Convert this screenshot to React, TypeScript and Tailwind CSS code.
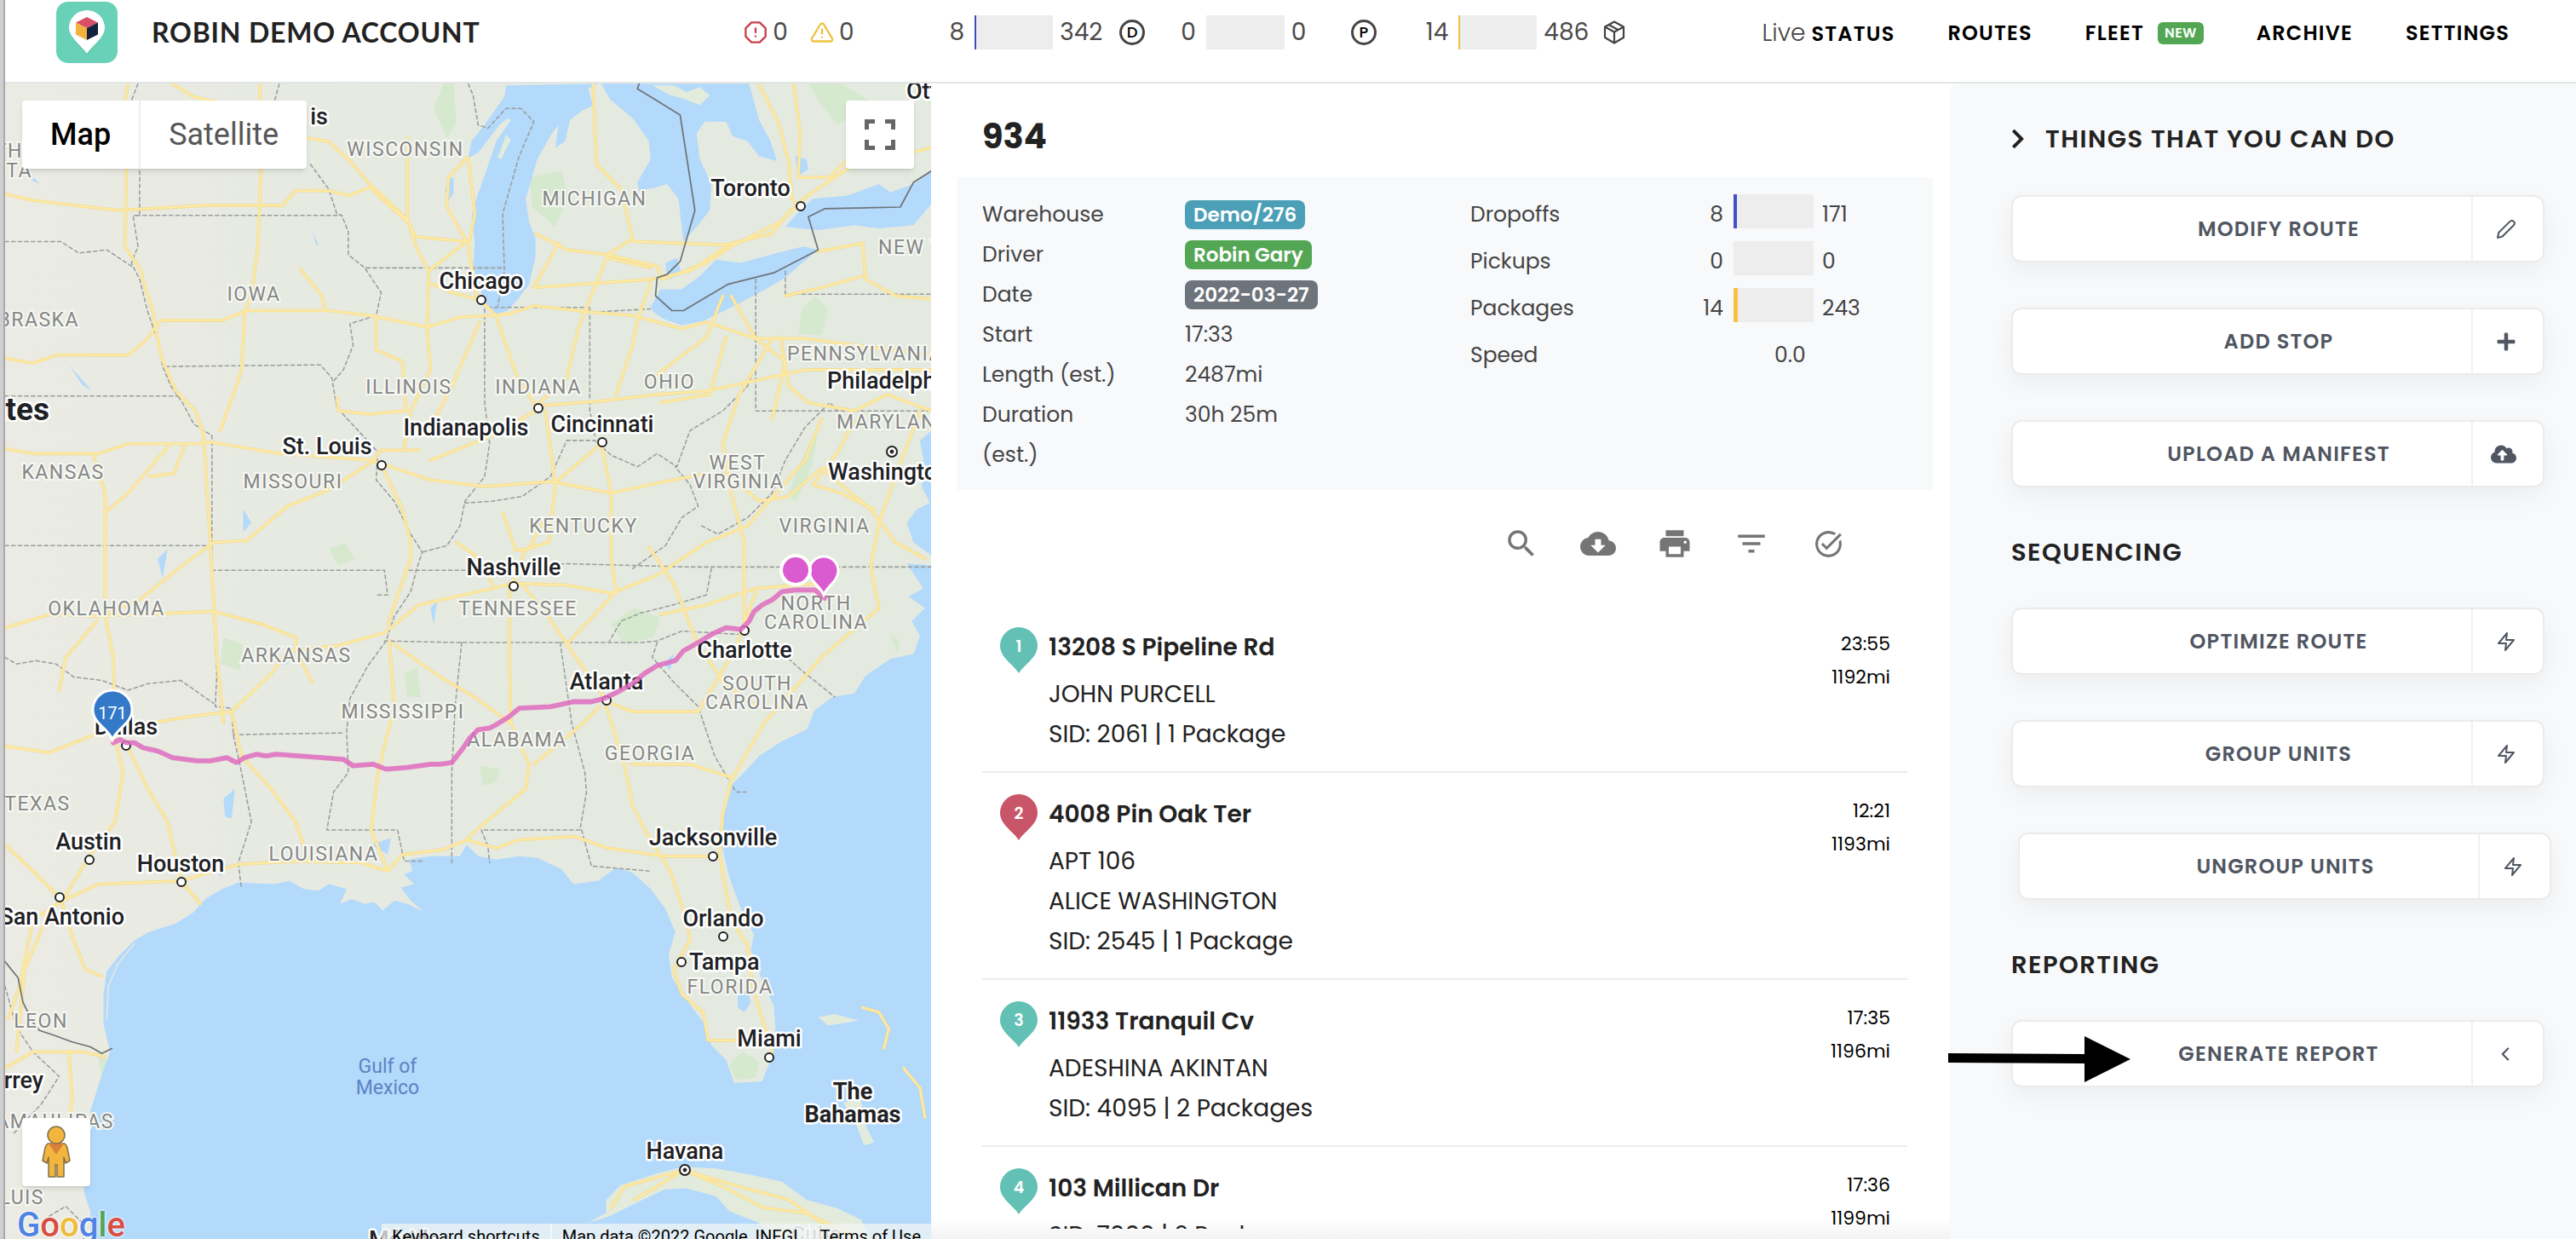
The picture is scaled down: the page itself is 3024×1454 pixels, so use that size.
import type { ReactNode } from "react";
import { FiAlertOctagon, FiAlertTriangle, FiChevronLeft, FiZap } from "react-icons/fi";
import { FaChevronRight, FaCloudUploadAlt, FaPlus } from "react-icons/fa";
import { MdCloudDownload, MdFilterList, MdPrint, MdSearch, MdTaskAlt } from "react-icons/md";

type Place = { name: string; x: number; y: number; anchor?: "start" | "end" };
type Dot = { x: number; y: number; capital?: boolean };
type Stop = { id: number; late?: boolean; title: string; lines: string[]; time: string; miles: string };

const water = [
  "308,52 307,59 295,76 287,86 285,96 291,93 304,76 309,72 311,73 302,86 296,104 291,118 287,131 289,147 288,162 293,178 296,187 303,191 309,189 316,181 322,173 326,156 326,145 322,135 320,121 323,111 327,97 336,81 340,76 338,90 344,86 347,73 355,67 361,64 358,54 364,51",
  "366,51 371,60 386,73 395,86 396,97 388,111 389,116 400,114 406,112 413,121 416,147 424,138 432,128 433,112 426,97 424,81 429,74 442,74 446,83 455,86 462,95 473,98 469,86 462,73 456,51",
  "396,187 394,183 398,190 404,194 415,198 429,195 447,186 466,176 478,169 487,161 498,152 489,150 469,155 451,160 436,158 426,168 415,176 402,176",
  "405,160 412,157 415,167 406,170",
  "487,128 495,121 516,119 535,112 542,117 556,112 567,104 567,124 556,137 535,139 520,137 498,140 478,138",
  "273,109 276,108 276,118 273,122 271,116",
  "484,95 491,97 492,103 486,107",
  "567,262 560,268 563,285 561,296 566,306 558,310 552,318 556,330 567,338 567,344 552,343 562,358 553,363 563,370 555,378 560,387 556,398 542,401 527,411 520,422 507,424 496,432 491,444 476,451 462,460 453,470 446,477 442,491 438,505 438,509 444,534 451,553 459,569 457,578 464,597 471,612 472,626 469,645 464,658 447,659 442,645 433,636 429,623 422,614 416,605 409,595 407,581 411,567 405,553 396,541 385,531 375,528 364,536 349,538 342,529 327,522 316,521 302,523 291,521 284,514 280,521 262,521 249,523 251,530 246,532 252,538 244,540 250,548 258,555 248,550 240,548 233,554 228,549 222,550 214,547 207,550 211,541 200,538 194,542 185,541 176,536 167,538 145,537 135,541 125,547 118,555 107,562 91,567 82,572 73,581 65,591 63,605 63,623 67,640 62,654 55,676 54,702 51,725 55,737 55,754 567,754",
  "449,606 455,602 457,610 453,616 449,613",
];

const islands = [
  "397,52 410,52 418,56 426,53 432,58 426,64 416,60 408,58",
  "303,96 308,82 311,85 305,97",
  "358,744 369,738 369,730 378,721 400,714 416,710 436,711 458,715 476,719 491,730 509,735 524,742 530,754 469,754 462,744 444,737 436,728 418,723 404,724 385,733 371,740",
  "513,671 524,669 527,685 532,695 526,697 520,681",
  "498,619 508,617 523,621 504,624",
];

const parks = [
  "270,51 276,51 278,75 272,84 264,66",
  "492,51 512,51 530,62 510,76 500,64",
  "322,108 342,104 346,120 338,138 324,126",
  "488,188 496,180 504,188 500,204 486,203",
  "372,380 386,370 402,376 398,388 380,392",
  "480,300 492,270 498,262 494,284 484,306",
  "136,388 148,392 146,408 134,404",
  "200,334 210,330 216,340 206,344",
  "444,648 452,640 462,646 460,656 448,657",
  "424,726 440,728 446,736 436,738",
  "246,410 254,406 256,424 248,424",
  "292,466 304,468 302,476 294,478",
  "542,386 548,390 546,398",
  "59,640 66,645 62,656",
];

const lakes = [
  "17,104 24,112 20,110",
  "42,222 56,238 50,234",
  "148,310 153,318 148,324",
  "96,340 102,334 99,352",
  "136,486 143,480 141,498 137,497",
  "262,370 266,366 264,380",
  "190,140 194,150 192,148",
  "404,404 410,398 408,408",
  "226,514 238,510 236,520",
  "132,522 138,526 134,534",
  "166,398 176,404 170,404",
];

const roads = [
  "3,118 20,122 72,128 125,125 172,125 180,116 200,116 212,119 225,114 240,128 248,135",
  "78,51 76,62 77,100 76,150 85,163 93,190 98,217 107,238 119,250 124,265 128,330 132,400 136,440",
  "158,51 159,100 157,150 153,180 149,190 147,225 142,240 134,262",
  "105,51 118,59 132,62",
  "3,218 20,221 35,216 78,216 88,208 98,195 135,195 150,189 200,189 225,192 260,199 280,193 300,192 310,191 325,186 360,190 385,192 415,200 430,196 460,206 490,206 520,210 567,216",
  "187,84 200,86 213,98 225,112 236,122 248,134 254,152 261,165 260,200 262,225",
  "248,84 248,134 253,144 284,147",
  "284,96 273,108 272,126 284,147 262,164",
  "285,96 289,130 285,150 290,180 302,192",
  "183,164 196,180 198,189",
  "229,192 229,213 245,220 247,250 225,252 206,250 205,242",
  "261,172 275,178 290,182",
  "3,273 20,276 60,276 78,270 120,270 128,269 170,276 225,280 232,282 262,292 295,296 336,293 372,300 400,294 430,288",
  "57,277 64,300 64,375 69,400 70,450 75,470 70,500 55,520 38,548 20,560 12,600 5,620",
  "64,312 78,300 102,272",
  "91,290 106,288 112,272",
  "3,382 30,374 60,375 130,372 160,380 180,388 180,396 190,415",
  "60,375 85,365 110,345 130,330 150,329 175,308 200,298 225,282 232,274 255,274",
  "59,378 40,400 36,420",
  "3,454 30,458 60,446 75,443 115,436 141,433 165,410 175,396 205,393 234,385 255,368 300,358 312,355 345,356 372,361 400,350 430,330 455,320 490,280 500,255",
  "141,433 147,460 165,480 180,500 188,524",
  "78,455 90,480 102,500 110,535",
  "38,548 60,538 110,536 145,526 180,524 220,525 236,530 245,520 270,517 284,511 302,516 316,511 350,509 370,516 404,521 433,521",
  "38,550 44,570 52,590 62,594",
  "3,514 20,530 38,548",
  "110,536 122,550",
  "237,390 240,430 230,470 226,505 236,530",
  "233,285 245,310 250,330 250,340 236,380",
  "262,225 250,250 246,272",
  "262,260 275,235 292,196",
  "240,392 265,410 290,425 311,440 322,465 320,480 290,505 284,511",
  "310,355 310,400 311,440",
  "278,330 292,340 300,356",
  "306,312 314,335 322,334 330,318",
  "332,250 338,295 334,330 320,334 312,356",
  "302,192 315,230 326,247 345,230 352,200 360,180 370,155 400,162 403,170 430,160 445,150 475,135 490,120 520,100 567,90",
  "326,247 366,244 400,240 430,238 490,225 567,225",
  "326,250 300,265 262,280",
  "366,270 340,292",
  "366,270 372,300 372,340 375,360 345,392 369,426",
  "345,392 330,370 318,356",
  "369,427 385,433 425,433 447,396 460,360",
  "369,430 380,465 385,490 395,510 408,530 418,560 420,572 410,590 415,605 428,616 431,633 447,633",
  "384,465 420,465 445,473",
  "365,430 355,440 325,465",
  "560,250 545,290 535,318 530,345 535,370 500,400 465,440 445,475 440,495 438,520 445,560 455,575 458,600 470,640",
  "453,385 453,330 445,300 440,270 450,240 470,206",
  "440,288 450,295 462,305 480,302 500,285 530,310 545,330 563,340",
  "395,333 410,355 424,390 440,415 460,430",
  "402,374 430,368 460,358 500,355",
  "520,256 510,275 495,295 512,300 532,310",
  "470,255 478,220 460,206 445,180",
  "400,228 430,205 440,180",
  "361,51 363,100 378,115 385,145 370,155 345,152 326,142",
  "385,147 442,149 470,142 481,128",
  "340,148 325,175 396,170 420,165 442,150",
  "396,172 388,195 385,210 375,240",
  "462,51 474,75 480,98 482,120 487,128",
  "483,51 487,80 486,108 505,108 515,98",
  "498,153 525,148 527,170 545,180 567,182",
  "478,180 500,175 525,168",
  "396,163 370,157",
  "442,205 432,240 402,245",
  "475,205 480,235 492,245 520,250 540,240 567,250",
  "3,650 20,640 50,640 64,643",
  "42,640 44,670 40,690 36,720",
  "30,555 15,590 10,640",
  "372,735 380,722 416,712 440,722 465,735 490,738 520,752",
  "416,712 450,722 480,730 500,744",
  "416,712 400,722 386,730",
  "525,613 535,616 541,626 538,638",
  "550,650 560,662 563,680",
];

const borders = [
  "84,51 80,61",
  "170,51 167,62",
  "189,100 200,115 205,130 208,131 212,141 212,155 222,163 232,178 229,192 213,197 215,210 209,225 203,232",
  "85,104 85,131 81,131 84,150 80,160 85,170 90,190 97,210 99,223 104,235 111,245 118,258 124,262 129,265 129,347 132,410 131,430 141,431 142,447 147,470 153,500 145,525 147,541",
  "83,131 208,131",
  "3,147 37,147 48,154 65,152 80,162",
  "3,241 109,241",
  "3,332 129,332",
  "101,223 195,222 202,230 205,248 218,262 230,275 229,292 240,305 250,325 257,336 254,345 250,360 240,375 235,390 224,405 213,425 211,445 212,470 203,482 199,505 242,505 246,524 258,524",
  "129,347 234,347 236,362 229,362",
  "223,163 307,163",
  "285,51 288,58 291,76 297,78 308,66 317,66 325,74 316,95 306,130 307,165 303,186",
  "297,187 359,187 359,190 396,188",
  "295,188 295,245 298,270 295,290 283,305 280,320 272,332 257,336",
  "359,188 359,250 362,265",
  "283,306 300,305 318,302 335,290 345,268 362,268 372,277 388,284 400,276 412,284 420,262 440,250 455,235 460,222",
  "460,170 460,250 567,250",
  "478,165 478,179 567,179",
  "249,347 295,347 345,343 420,345 480,345 567,345",
  "234,390 280,391 390,391 400,390 415,384 450,386",
  "433,346 430,362 410,368 390,373 378,378 371,390",
  "281,391 277,430 275,470 275,525",
  "341,391 348,440 356,470 357,482 353,505 293,505 297,515 298,525",
  "354,505 360,527 395,530",
  "400,391 397,400 410,415 425,430 435,460 448,482 454,482",
  "468,390 488,408 508,424",
  "142,447 209,446",
  "427,320 437,325 455,315 470,300 478,280 490,260 505,245 510,250",
  "385,346 405,332 415,315 425,308 420,295 411,284",
  "3,400 10,404 22,402 34,404 45,412 62,414 78,420 90,416 110,414 130,428",
  "3,600 10,625 20,640 36,655 25,672 8,690",
  "30,740 40,734 50,744",
];

const cities: Place[] = [
  { name: "Ottawa", x: 1064, y: 116, anchor: "start" },
  { name: "is", x: 385, y: 146, anchor: "end" },
  { name: "Toronto", x: 881, y: 230 },
  { name: "Chicago", x: 565, y: 339 },
  { name: "Indianapolis", x: 547, y: 511 },
  { name: "Cincinnati", x: 707, y: 507 },
  { name: "St. Louis", x: 384, y: 533 },
  { name: "Philadelphia", x: 971, y: 456, anchor: "start" },
  { name: "Washington", x: 972, y: 563, anchor: "start" },
  { name: "Nashville", x: 603, y: 675 },
  { name: "Charlotte", x: 874, y: 772 },
  { name: "Atlanta", x: 712, y: 809 },
  { name: "Dallas", x: 148, y: 862 },
  { name: "Austin", x: 104, y: 997 },
  { name: "Houston", x: 212, y: 1023 },
  { name: "San Antonio", x: 146, y: 1085, anchor: "end" },
  { name: "Jacksonville", x: 837, y: 992 },
  { name: "Orlando", x: 849, y: 1087 },
  { name: "Tampa", x: 809, y: 1138, anchor: "start" },
  { name: "Miami", x: 903, y: 1228 },
  { name: "Havana", x: 804, y: 1360 },
  { name: "Monterrey", x: 51, y: 1277, anchor: "end" },
  { name: "Mérida", x: 433, y: 1464, anchor: "start" },
];

const states: Place[] = [
  { name: "SOUTH", x: 27, y: 185, anchor: "end" },
  { name: "DAKOTA", x: 38, y: 208, anchor: "end" },
  { name: "WISCONSIN", x: 476, y: 183 },
  { name: "MICHIGAN", x: 698, y: 241 },
  { name: "IOWA", x: 298, y: 353 },
  { name: "NEBRASKA", x: 93, y: 383, anchor: "end" },
  { name: "ILLINOIS", x: 480, y: 462 },
  { name: "INDIANA", x: 632, y: 462 },
  { name: "OHIO", x: 786, y: 456 },
  { name: "PENNSYLVANIA", x: 924, y: 423, anchor: "start" },
  { name: "NEW YORK", x: 1031, y: 298, anchor: "start" },
  { name: "MARYLAND", x: 982, y: 503, anchor: "start" },
  { name: "KANSAS", x: 74, y: 562 },
  { name: "MISSOURI", x: 344, y: 573 },
  { name: "WEST", x: 866, y: 551 },
  { name: "VIRGINIA", x: 867, y: 573 },
  { name: "KENTUCKY", x: 685, y: 625 },
  { name: "VIRGINIA", x: 968, y: 625 },
  { name: "NORTH", x: 958, y: 716 },
  { name: "CAROLINA", x: 958, y: 738 },
  { name: "OKLAHOMA", x: 125, y: 722 },
  { name: "TENNESSEE", x: 608, y: 722 },
  { name: "ARKANSAS", x: 348, y: 777 },
  { name: "SOUTH", x: 889, y: 810 },
  { name: "CAROLINA", x: 889, y: 832 },
  { name: "MISSISSIPPI", x: 473, y: 843 },
  { name: "ALABAMA", x: 607, y: 876 },
  { name: "GEORGIA", x: 763, y: 892 },
  { name: "TEXAS", x: 44, y: 951 },
  { name: "LOUISIANA", x: 380, y: 1010 },
  { name: "FLORIDA", x: 857, y: 1166 },
  { name: "LEON", x: 48, y: 1206 },
  { name: "TAMAULIPAS", x: 134, y: 1324, anchor: "end" },
  { name: "LUIS", x: 52, y: 1413, anchor: "end" },
  { name: "Cuba", x: 959, y: 1456 },
];

const dots: Dot[] = [
  { x: 940, y: 242 },
  { x: 565, y: 352 },
  { x: 632, y: 479 },
  { x: 707, y: 519 },
  { x: 448, y: 546 },
  { x: 1047, y: 530, capital: true },
  { x: 603, y: 688 },
  { x: 874, y: 740 },
  { x: 712, y: 822 },
  { x: 148, y: 875 },
  { x: 105, y: 1009 },
  { x: 213, y: 1035 },
  { x: 70, y: 1053 },
  { x: 837, y: 1005 },
  { x: 849, y: 1099 },
  { x: 800, y: 1129 },
  { x: 903, y: 1241 },
  { x: 804, y: 1373, capital: true },
];

const route =
  "69,452 73,450 77,452 82,452 87,455 96,457 105,461 120,463 128,463 138,461 144,464 149,461 156,459 162,460 168,459 182,460 196,461 209,462 215,466 227,465 235,468 248,467 262,465 268,465 275,464 282,455 286,449 291,444 298,443 302,441 310,436 316,431 335,430 349,427 360,427 368,425 376,421 385,416 392,410 400,405 411,402 416,396 425,391 433,386 442,382 451,383 456,378 459,372 464,368 470,365 476,360 484,359 496,359 502,364";

const stops: Stop[] = [
  { id: 1, title: "13208 S Pipeline Rd", lines: ["JOHN PURCELL", "SID: 2061 | 1 Package"], time: "23:55", miles: "1192mi" },
  { id: 2, late: true, title: "4008 Pin Oak Ter", lines: ["APT 106", "ALICE WASHINGTON", "SID: 2545 | 1 Package"], time: "12:21", miles: "1193mi" },
  { id: 3, title: "11933 Tranquil Cv", lines: ["ADESHINA AKINTAN", "SID: 4095 | 2 Packages"], time: "17:35", miles: "1196mi" },
  { id: 4, title: "103 Millican Dr", lines: ["SID: 7000 | 2 Packages"], time: "17:36", miles: "1199mi" },
];

const tools = [
  { label: "Search", icon: <MdSearch size={42} /> },
  { label: "Download", icon: <MdCloudDownload size={42} /> },
  { label: "Print", icon: <MdPrint size={42} /> },
  { label: "Filter", icon: <MdFilterList size={42} /> },
  { label: "Complete", icon: <MdTaskAlt size={37} /> },
];

function Logo() {
  return (
    <svg viewBox="0 0 72 72" className="size-[72px] shrink-0">
      <rect width="72" height="72" rx="14" fill="#68d1b8" />
      <path d="M36 63C29 53 15 43 15 31a21 21 0 0 1 42 0c0 12-14 22-21 32z" fill="#3fa58d" opacity=".35" />
      <path d="M36 61C29 51 15 42 15 30.500a21 20.500 0 0 1 42 0C57 42 43 51 36 61z" fill="#fff" />
      <path d="M36 18l13 6.500L36 31l-13-6.500z" fill="#d94f66" />
      <path d="M23 24.500L36 31v14l-13-6.500z" fill="#f2b23c" />
      <path d="M49 24.500L36 31v14l13-6.500z" fill="#13233f" />
    </svg>
  );
}

function PackageIcon() {
  return (
    <svg viewBox="0 0 26 28" className="h-7 w-[26px]" fill="none" stroke="#444" strokeWidth="2.200" strokeLinejoin="round">
      <path d="M13 1.500l11 6v12.500l-11 6.500L2 20V7.500z" />
      <path d="M2 7.500l11 6 11-6M13 13.500v13M6.500 5l11 6" />
    </svg>
  );
}

function LetterIcon({ letter }: { letter: string }) {
  return (
    <span className="flex size-[30px] items-center justify-center rounded-full border-[3px] border-[#444] text-lg leading-none font-medium text-black">
      {letter}
    </span>
  );
}

function PencilIcon() {
  return (
    <svg viewBox="0 0 24 24" className="size-6" fill="none" stroke="currentColor" strokeWidth="2" strokeLinejoin="round">
      <path d="M2 22l1.200-6L16.500 2.900a3 3 0 0 1 4.400 4.300L7.600 20.500z" />
    </svg>
  );
}

function Meter({ className, fill }: { className: string; fill?: string }) {
  return (
    <span className={`flex h-10 bg-[#ededed] ${className}`}>
      {fill && <span className={`h-full ${fill}`} />}
    </span>
  );
}

function HeaderStat({ done, total, fill, icon }: { done: number; total: number; fill?: string; icon: ReactNode }) {
  return (
    <div className="flex items-center">
      <span className="mr-3">{done}</span>
      <Meter className="w-[92px]" fill={fill} />
      <span className="ml-2 w-[70px]">{total}</span>
      {icon}
    </div>
  );
}

function Header() {
  return (
    <header className="flex h-[98px] shrink-0 border-b-2 border-[#e2e4e5] bg-white pb-5 text-[28px] text-[#4a4a4a]">
      <div className="flex w-[36%] items-center pr-[90px] pl-[60px]">
        <Logo />
        <h1 className="ml-10 font-['Lato',sans-serif] text-[32px] font-bold tracking-wide whitespace-nowrap text-[#222]">
          ROBIN DEMO ACCOUNT
        </h1>
        <div className="ml-auto flex items-center gap-[6px]">
          <FiAlertOctagon className="size-7 text-[#c9404d]" />
          <span>0</span>
          <FiAlertTriangle className="ml-5 size-7 text-[#efc03f]" />
          <span>0</span>
        </div>
      </div>
      <div className="flex items-center gap-[42px] pl-[22px]">
        <HeaderStat done={8} total={342} fill="w-[2px] bg-[#3c50b4]" icon={<LetterIcon letter="D" />} />
        <HeaderStat done={0} total={0} icon={<LetterIcon letter="P" />} />
        <div className="pl-4">
          <HeaderStat done={14} total={486} fill="w-[2px] bg-[#f0c040]" icon={<PackageIcon />} />
        </div>
      </div>
      <nav className="ml-auto flex items-center gap-[62px] pt-[2px] pr-[78px] text-2xl font-semibold tracking-wider text-black">
        <a href="#status">
          <span className="text-[28px] font-light tracking-normal text-[#444]">Live</span> STATUS
        </a>
        <a href="#routes">ROUTES</a>
        <a href="#fleet" className="flex items-center">
          FLEET
          <span className="ml-4 rounded-md bg-[#53a653] px-2 text-base leading-[26px] font-semibold tracking-wide text-white">NEW</span>
        </a>
        <a href="#archive">ARCHIVE</a>
        <a href="#settings">SETTINGS</a>
      </nav>
    </header>
  );
}

function MapDrawing() {
  return (
    <svg
      viewBox="6 98 1087 1356"
      preserveAspectRatio="xMinYMin slice"
      className="absolute inset-0 size-full font-['Roboto',sans-serif]"
    >
      <defs>
        <linearGradient id="land" x1="0" x2="1">
          <stop offset="0" stopColor="#ebebe3" />
          <stop offset=".35" stopColor="#e6eae1" />
          <stop offset="1" stopColor="#e4eadf" />
        </linearGradient>
      </defs>
      <rect x="0" y="90" width="1100" height="1380" fill="url(#land)" />
      <g transform="scale(1.9286)" fill="none" strokeLinejoin="round" strokeLinecap="round">
        {parks.map((points) => (
          <polygon key={points} points={points} fill="#cfe8c8" opacity=".7" />
        ))}
        {lakes.map((points) => (
          <polygon key={points} points={points} fill="#b3d9fb" />
        ))}
        {water.map((points) => (
          <polygon key={points} points={points} fill="#b3d9fb" />
        ))}
        {islands.map((points) => (
          <polygon key={points} points={points} fill="#e3ebdc" />
        ))}
        <polyline points="82,574 72,586 66,600 65,620" stroke="#e6eae0" strokeWidth=".8" />
        {borders.map((points) => (
          <polyline key={points} points={points} stroke="#9a9d9d" strokeWidth=".8" strokeDasharray="2.200 1.800" />
        ))}
        {roads.map((points) => (
          <polyline key={points} points={points} stroke="#f1d98c" strokeWidth="1.900" />
        ))}
        {roads.map((points) => (
          <polyline key={points} points={points} stroke="#fde9a4" strokeWidth="1.300" />
        ))}
        <polyline
          points="389,51 388,54 414,70 423,128 414,159 406,167 400,169 399,180 409,189 416,189 443,173 471,166 498,152 495,142 492,132 502,127 548,126 556,111 567,104"
          stroke="#6e7478"
          strokeWidth=".9"
        />
        <polyline points="3,585 11,595 14,610 20,622 24,627 33,630 44,634 55,637 62,641 68,638" stroke="#6e7478" strokeWidth=".9" />
      </g>

      <g fontSize="23" letterSpacing="1.500" fill="#868686" stroke="#f6f8f3" strokeWidth="4" paintOrder="stroke">
        {states.map((s) => (
          <text key={`${s.name}${s.x}`} x={s.x} y={s.y} textAnchor={s.anchor ?? "middle"}>
            {s.name}
          </text>
        ))}
      </g>
      {dots.map((d) => (
        <g key={`${d.x}-${d.y}`} stroke="#222">
          <circle cx={d.x} cy={d.y} r={d.capital ? 6 : 5} fill="#fff" strokeWidth="2" />
          {d.capital && <circle cx={d.x} cy={d.y} r="2" fill="#222" />}
        </g>
      ))}
      <g fontSize="27" fontWeight="500" fill="#202124" stroke="#fff" strokeWidth="5" strokeLinejoin="round" paintOrder="stroke">
        {cities.map((c) => (
          <text key={c.name} x={c.x} y={c.y} textAnchor={c.anchor ?? "middle"}>
            {c.name}
          </text>
        ))}
        <g fontWeight="700">
          <text x="1001" y="1290" textAnchor="middle">The</text>
          <text x="1001" y="1317" textAnchor="middle">Bahamas</text>
          <text x="58" y="493" fontSize="37" textAnchor="end">United States</text>
        </g>
      </g>
      <g fontSize="23" fill="#5b84c4" textAnchor="middle">
        <text x="455" y="1259">Gulf of</text>
        <text x="455" y="1284">Mexico</text>
      </g>

      <polyline
        points={route}
        transform="scale(1.9286)"
        fill="none"
        stroke="#df6cbf"
        strokeOpacity=".85"
        strokeWidth="3"
        strokeLinejoin="round"
        strokeLinecap="round"
      />
      <path d="M967 698C963 688 950 682 950 670a17 17 0 0 1 34 0c0 12-13 18-17 28z" fill="#da5bcf" stroke="#fff" strokeWidth="3" />
      <circle cx="934" cy="669" r="17" fill="#da5bcf" stroke="#fff" strokeWidth="4" />
      <path d="M132 868C127 855 109 849 109 833a23 23 0 0 1 46 0c0 16-18 22-23 35z" fill="#3379c8" stroke="#fff" strokeWidth="3" />
      <text x="132" y="844" fontSize="20" fill="#fff" textAnchor="middle">171</text>
    </svg>
  );
}

function RouteMap() {
  return (
    <section aria-label="Route map" className="relative overflow-hidden font-['Roboto',sans-serif]">
      <MapDrawing />
      <div className="absolute top-5 left-5 flex h-20 rounded-sm bg-white text-[36px] shadow-md">
        <button className="border-r-2 border-[#eee] px-[33px] font-medium text-black">Map</button>
        <button className="px-[33px] text-[#565656]">Satellite</button>
      </div>
      <button aria-label="Fullscreen" className="absolute top-5 right-5 flex size-20 items-center justify-center rounded-sm bg-white shadow-md">
        <svg viewBox="0 0 36 36" className="size-9" fill="none" stroke="#666" strokeWidth="5">
          <path d="M2.500 12V2.500H12M24 2.500h9.500V12M33.500 24v9.500H24M12 33.500H2.500V24" />
        </svg>
      </button>
      <button aria-label="Street View" className="absolute bottom-[62px] left-5 flex size-20 items-center justify-center rounded-sm bg-white shadow-md">
        <svg viewBox="0 0 36 62" className="h-[62px] w-9" fill="#f2b63f" stroke="#80704a" strokeWidth="1.500" strokeLinejoin="round">
          <path d="M9 21h18c2 0 3 2 4 5l3 15-5 3-2-7v23h-8V46h-2v14H9V37l-2 7-5-3 3-15c1-3 2-5 4-5z" />
          <path d="M9 21h18l-9 13z" fill="#d9803b" stroke="none" />
          <circle cx="18" cy="11" r="10" />
        </svg>
      </button>
      <div className="absolute -bottom-1 left-[14px] text-[40px] leading-10 font-medium [text-shadow:0_0_3px_white,0_0_3px_white]">
        <span className="text-[#4f83e4]">G</span>
        <span className="text-[#d84f42]">o</span>
        <span className="text-[#efbb3c]">o</span>
        <span className="text-[#4f83e4]">g</span>
        <span className="text-[#4fa65a]">l</span>
        <span className="text-[#d84f42]">e</span>
      </div>
      <div className="absolute right-0 -bottom-3 flex h-[30px] bg-[#f0f4f4]/75 text-[20px] leading-[30px] whitespace-nowrap text-black">
        <button className="border-r-2 border-white/60 px-3">Keyboard shortcuts</button>
        <span className="px-3">Map data ©2022 Google, INEGI</span>
        <a href="#terms" className="border-l-2 border-white/60 px-3">
          Terms of Use
        </a>
      </div>
    </section>
  );
}

function Badge({ color, children }: { color: string; children: ReactNode }) {
  return <span className={`rounded-lg px-[10px] py-1 text-[23px] leading-[26px] font-semibold text-white ${color}`}>{children}</span>;
}

function Fact({ label, children }: { label: string; children: ReactNode }) {
  return (
    <div className="flex">
      <dt className="mr-[66px] w-[172px]">{label}</dt>
      <dd className="flex h-[47px] items-center">{children}</dd>
    </div>
  );
}

function Progress({ label, done, total, fill }: { label: string; done: number; total: number; fill?: string }) {
  return (
    <div className="flex h-[55px] items-start leading-[47px]">
      <dt className="flex-1">{label}</dt>
      <dd className="flex w-[278px]">
        <span className="mr-3 w-[62px] text-right">{done}</span>
        <Meter className="w-[94px]" fill={fill} />
        <span className="ml-[10px]">{total}</span>
      </dd>
    </div>
  );
}

function RouteSummary() {
  return (
    <div className="flex bg-[#f8f9fb] px-[30px] pt-5 pb-[18px] text-[25px] leading-[47px] text-[#444]">
      <dl className="w-[573px]">
        <Fact label="Warehouse">
          <Badge color="bg-[#4b9fb6]">Demo/276</Badge>
        </Fact>
        <Fact label="Driver">
          <Badge color="bg-[#53a653]">Robin Gary</Badge>
        </Fact>
        <Fact label="Date">
          <Badge color="bg-[#6d747c]">2022-03-27</Badge>
        </Fact>
        <Fact label="Start">17:33</Fact>
        <Fact label="Length (est.)">2487mi</Fact>
        <Fact label="Duration (est.)">30h 25m</Fact>
      </dl>
      <dl className="flex-1">
        <Progress label="Dropoffs" done={8} total={171} fill="w-1 bg-[#4550c8]" />
        <Progress label="Pickups" done={0} total={0} />
        <Progress label="Packages" done={14} total={243} fill="w-[5px] bg-[#f5c244]" />
        <div className="flex">
          <dt className="flex-1">Speed</dt>
          <dd className="w-[278px] pl-[122px]">0.0</dd>
        </div>
      </dl>
    </div>
  );
}

function StopRow({ stop }: { stop: Stop }) {
  return (
    <li className="flex border-b-2 border-[#ebebeb] pt-[25px] pr-5 pb-5 pl-[21px]">
      <span className="relative mr-[13px] flex h-[54px] w-11 shrink-0 justify-center text-[19px] leading-[46px] font-semibold text-white">
        <svg
          viewBox="0 0 44 54"
          className={stop.late ? "absolute inset-0 size-full fill-[#c95568]" : "absolute inset-0 size-full fill-[#62c0b5]"}
        >
          <path d="M22 54C16 44 0 36 0 22a22 22 0 0 1 44 0c0 14-16 22-22 32z" />
        </svg>
        <span className="relative">{stop.id}</span>
      </span>
      <div className="flex-1 text-[28px] leading-[47px] text-[#222]">
        <h3 className="mb-2 font-semibold">{stop.title}</h3>
        {stop.lines.map((line) => (
          <p key={line}>{line}</p>
        ))}
      </div>
      <div className="text-right text-[22px] leading-[39px] text-black">
        <p>{stop.time}</p>
        <p>{stop.miles}</p>
      </div>
    </li>
  );
}

function RoutePanel() {
  return (
    <section className="relative flex min-h-0 flex-col bg-white pr-5 pb-3 pl-[30px]">
      <h2 className="pt-[38px] pb-6 pl-[30px] text-[40px] leading-[48px] font-bold text-[#222]">934</h2>
      <RouteSummary />
      <div className="flex justify-end gap-12 pt-[42px] pb-10 pr-[102px] text-[#757575]">
        {tools.map((tool) => (
          <button key={tool.label} aria-label={tool.label} className="flex size-[42px] items-center justify-center">
            {tool.icon}
          </button>
        ))}
      </div>
      <ul className="mt-3 min-h-0 flex-1 overflow-hidden px-[30px]">
        {stops.map((stop) => (
          <StopRow key={stop.id} stop={stop} />
        ))}
      </ul>
      <div className="pointer-events-none absolute inset-x-0 bottom-0 h-6 bg-gradient-to-t from-black/5 to-transparent" />
    </section>
  );
}

function ActionButton({ label, icon, className = "" }: { label: string; icon: ReactNode; className?: string }) {
  return (
    <button
      className={`flex h-[79px] items-center rounded-xl border-2 border-[#ebebeb] bg-white text-2xl font-semibold tracking-wider text-[#505662] shadow-[0_10px_30px_rgba(0,0,0,0.05)] ${className}`}
    >
      <span className="flex-1 pl-[86px]">{label}</span>
      <span className="flex h-full w-[84px] items-center justify-end border-l-2 border-[#f0f0f0] pr-[31px]">{icon}</span>
    </button>
  );
}

function SectionTitle({ children }: { children: ReactNode }) {
  return <h2 className="mt-14 mb-[45px] text-[29px] leading-10 font-semibold tracking-wider text-[#222]">{children}</h2>;
}

function ActionsPanel() {
  return (
    <aside className="rounded-tl-lg bg-[#f8f9fb] pt-[45px] pr-[37px] pl-[72px]">
      <button className="mb-[46px] flex items-center text-[29px] leading-10 font-semibold tracking-wider whitespace-nowrap text-[#222]">
        <FaChevronRight className="mr-6 h-[26px] w-4" />
        THINGS THAT YOU CAN DO
      </button>
      <div className="flex flex-col gap-[53px]">
        <ActionButton label="MODIFY ROUTE" icon={<PencilIcon />} />
        <ActionButton label="ADD STOP" icon={<FaPlus size={24} />} />
        <ActionButton label="UPLOAD A MANIFEST" icon={<FaCloudUploadAlt size={30} />} />
      </div>
      <SectionTitle>SEQUENCING</SectionTitle>
      <div className="flex flex-col gap-[53px]">
        <ActionButton label="OPTIMIZE ROUTE" icon={<FiZap size={24} />} />
        <ActionButton label="GROUP UNITS" icon={<FiZap size={24} />} />
        <ActionButton label="UNGROUP UNITS" icon={<FiZap size={24} />} className="-mr-2 ml-2" />
      </div>
      <SectionTitle>REPORTING</SectionTitle>
      <div className="relative flex flex-col">
        <ActionButton label="GENERATE REPORT" icon={<FiChevronLeft size={26} />} />
        <svg viewBox="0 0 214 54" className="pointer-events-none absolute top-[19px] -left-[74px] h-[54px] w-[214px]">
          <path d="M0 20l160 1V0l54 27-54 27V32L0 31z" />
        </svg>
      </div>
    </aside>
  );
}

export default function App() {
  return (
    <div className="flex h-screen overflow-hidden bg-white font-['Poppins','Inter',sans-serif]">
      <div className="w-[6px] shrink-0 border-r-2 border-[#a9a9ab] bg-[#cfcfd1]" />
      <div className="flex min-w-0 flex-1 flex-col">
        <Header />
        <main className="grid min-h-0 flex-1 grid-cols-[minmax(0,1087fr)_minmax(0,1196fr)_minmax(0,735fr)]">
          <RouteMap />
          <RoutePanel />
          <ActionsPanel />
        </main>
      </div>
    </div>
  );
}
